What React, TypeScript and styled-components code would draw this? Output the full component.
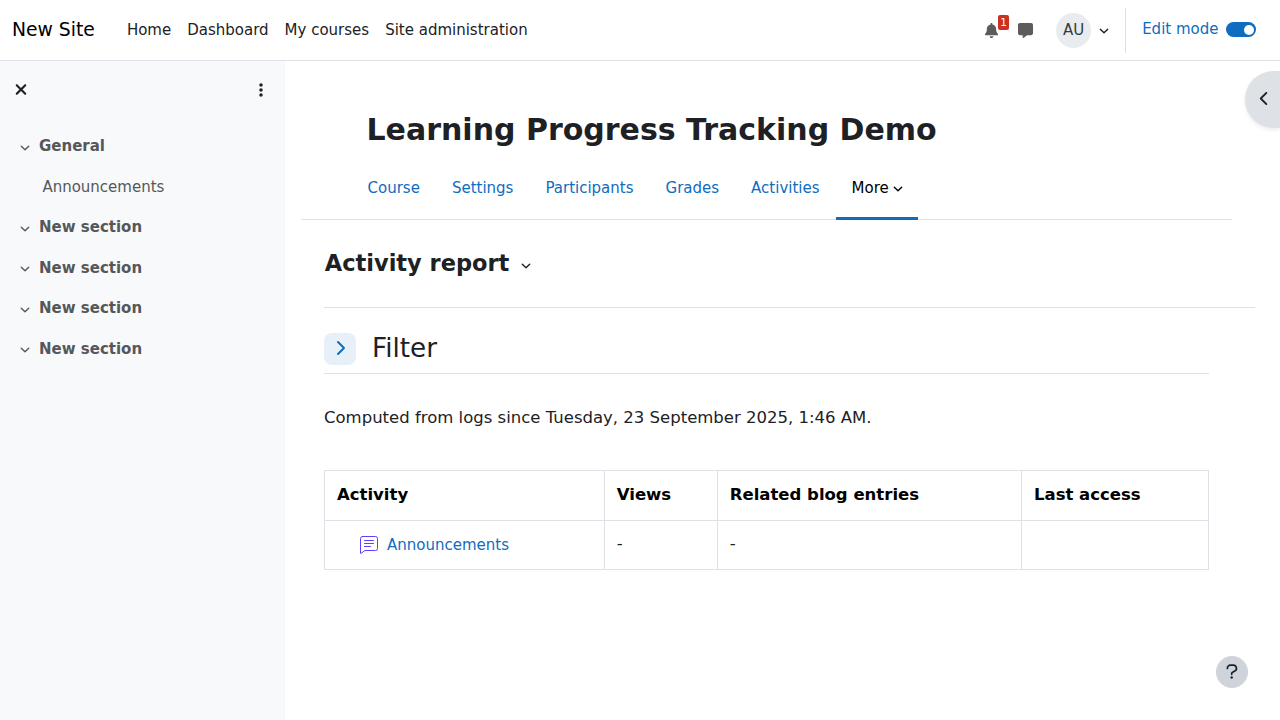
import React from 'react';
import styled, { createGlobalStyle } from 'styled-components';
import {
  FaBell,
  FaMessage,
  FaXmark,
  FaEllipsisVertical,
  FaChevronLeft,
  FaChevronRight,
} from 'react-icons/fa6';

const GlobalStyle = createGlobalStyle`
  *, *::before, *::after { box-sizing: border-box; }
  body {
    margin: 0;
    background: #fff;
    color: #1d2125;
    font-family: "DejaVu Sans", sans-serif;
    font-size: 15px;
    line-height: 1.5;
    overflow: hidden;
  }
  h1, h2, h3, p, ul { margin: 0; padding: 0; }
  ul { list-style: none; }
  a { color: #0f6cbf; text-decoration: none; }
  button { border: 0; padding: 0; font: inherit; color: inherit; background: none; }
  svg { display: block; }
`;

const Page = styled.div`
  height: 720px;
  display: flex;
  flex-direction: column;
`;

const Navbar = styled.header`
  flex: none;
  height: 61px;
  display: flex;
  align-items: center;
  padding: 0 24px 0 12px;
  border-bottom: 1px solid #dee2e6;
`;

const Brand = styled.a`
  width: 114.9px;
  color: #000;
  font-size: 18.75px;
  line-height: 28px;
  white-space: nowrap;
`;

const PrimaryNav = styled.nav`
  display: flex;
  gap: 16px;
  flex: 1;
`;

const PrimaryLink = styled.a`
  color: #1d2125;
`;

const NavTools = styled.div`
  display: flex;
  align-items: center;
  height: 60px;
`;

const ToolButton = styled.button<{ $gap: number }>`
  position: relative;
  color: #5c5c5c;
  margin-right: ${(p) => p.$gap}px;
`;

const CountBadge = styled.span`
  position: absolute;
  left: 14px;
  top: -8px;
  width: 11px;
  height: 15px;
  border-radius: 2px;
  background: #ca3120;
  color: #fff;
  font-size: 10.5px;
  line-height: 15px;
  text-align: center;
`;

const Avatar = styled.span`
  width: 35px;
  height: 35px;
  border-radius: 50%;
  background: #e9ecef;
  color: #343a40;
  display: grid;
  place-items: center;
  margin-right: 8px;
`;

const CaretIcon = styled.svg<{ $top: number; $left: number }>`
  width: 10px;
  height: 10px;
  margin-top: ${(p) => p.$top}px;
  margin-left: ${(p) => p.$left}px;
  flex: none;
  fill: none;
  stroke: currentColor;
  stroke-width: 1.4;
  stroke-linecap: round;
  stroke-linejoin: round;
`;

const Caret = ({ top = 0, left = 0 }: { top?: number; left?: number }) => (
  <CaretIcon viewBox="0 0 10 10" $top={top} $left={left}>
    <path d="M1.300 3.200L5 6.800L8.700 3.200" />
  </CaretIcon>
);

const EditMode = styled.label`
  display: flex;
  align-items: center;
  height: 45px;
  margin-left: 16px;
  padding: 0 0 1px 16px;
  border-left: 1px solid #dee2e6;
  color: #0f6cbf;
`;

const Toggle = styled.span`
  width: 30px;
  height: 15px;
  border-radius: 8px;
  background: #0f6cbf;
  margin-left: 7.5px;
  padding: 2.5px;
  display: flex;
  justify-content: flex-end;

  &::after {
    content: '';
    width: 10px;
    height: 10px;
    border-radius: 50%;
    background: #fff;
  }
`;

const Body = styled.div`
  flex: 1;
  display: flex;
  min-height: 0;
`;

const Sidebar = styled.aside`
  width: 285px;
  flex: none;
  background: #f8f9fb;
`;

const DrawerHeader = styled.div`
  height: 58px;
  display: flex;
  align-items: center;
  justify-content: space-between;
  padding: 0 16px 0 12px;
`;

const CloseIcon = styled(FaXmark)`
  width: 18px;
  height: 17px;
  margin-bottom: 1px;
`;

const IndexList = styled.ul`
  padding: 7px 0 0 20px;
`;

const IndexSection = styled.li`
  display: flex;
  align-items: center;
  height: 40.5px;
  gap: 9px;
  color: #555759;
  font-weight: 700;
`;

const IndexItem = styled.li`
  display: flex;
  align-items: center;
  height: 40.5px;
  padding: 1px 0 0 22.4px;
  color: #555759;
`;

const Main = styled.main`
  flex: 1;
  min-width: 0;
`;

const CourseTitle = styled.h1`
  padding: 46px 0 0 81.5px;
  font-size: 30px;
  line-height: 45px;
`;

const Tabs = styled.nav`
  display: flex;
  height: 65px;
  margin: 3px 48px 0 16px;
  padding: 3px 0 0 50.5px;
  border-bottom: 1px solid #dee2e6;
`;

const Tab = styled.a<{ $active?: boolean }>`
  display: flex;
  align-items: center;
  height: 62px;
  padding: 2px ${(p) => (p.$active ? 15.5 : 16)}px 0 16px;
  color: ${(p) => (p.$active ? '#000' : '#0f6cbf')};
  border-bottom: 3px solid ${(p) => (p.$active ? '#0f6cbf' : 'transparent')};
`;

const Report = styled.section`
  padding: 0 71px 0 39px;
`;

const ReportHeader = styled.div`
  display: flex;
  align-items: center;
  height: 88px;
  margin-right: -46px;
  padding: 0 0 2px 0.75px;
  border-bottom: 1px solid #dee2e6;
`;

const ReportTitle = styled.h2`
  font-size: 22.5px;
  line-height: 34px;
`;

const FilterRow = styled.div`
  display: flex;
  align-items: center;
  height: 66px;
  padding-top: 17px;
  border-bottom: 1px solid #dee2e6;
`;

const ExpandButton = styled.button`
  width: 32px;
  height: 32px;
  border-radius: 8px;
  display: grid;
  place-items: center;
  padding-bottom: 2px;
  background: #e7f0f9;
  color: #0f6cbf;
  margin-right: 16px;
`;

const FilterTitle = styled.h3`
  font-size: 26.25px;
  font-weight: 400;
  line-height: 32px;
  margin-bottom: 2px;
`;

const Note = styled.p`
  padding-top: 32px;
  font-size: 16.5px;
  line-height: 24px;
`;

const Table = styled.table`
  width: 885px;
  margin-top: 40px;
  border-collapse: collapse;
  table-layout: fixed;
  font-size: 16.5px;
`;

const cell = `
  border: 1px solid #dee2e6;
  padding: 0 12px 0 11.75px;
  text-align: left;

  &:first-child, &:last-child {
    padding-left: 12px;
  }
`;

const HeadCell = styled.th<{ $width: number }>`
  ${cell}
  width: ${(p) => p.$width}px;
  height: 50px;
  color: #000;
`;

const Cell = styled.td`
  ${cell}
  height: 49px;
  padding-bottom: 2px;
`;

const ActivityLink = styled.a`
  display: flex;
  align-items: center;
  gap: 9px;
  padding: 3px 0 0 23px;
  font-size: 15px;

  svg {
    margin-bottom: 1px;
  }
`;

const DrawerToggle = styled.button`
  position: absolute;
  top: 71px;
  right: 0;
  width: 35px;
  height: 57px;
  padding: 0 0 2px 12px;
  display: flex;
  align-items: center;
  border-radius: 29px 0 0 29px;
  background: #dee2e6;
  box-shadow: 0 2px 4px rgba(0, 0, 0, 0.08);
`;

const HelpButton = styled.button`
  position: absolute;
  right: 32px;
  bottom: 32px;
  width: 32px;
  height: 32px;
  border-radius: 50%;
  display: grid;
  place-items: center;
  padding-bottom: 2px;
  background: #ced4da;
`;

const ForumIcon = () => (
  <svg width="18" height="18" viewBox="0 0 18 18" fill="none" stroke="#5b40ff" strokeLinecap="round" strokeLinejoin="round">
    <path d="M2.500.5h13a2 2 0 0 1 2 2v10a2 2 0 0 1-2 2H5L.9 17.500c-.2.1-.4 0-.4-.2V2.500a2 2 0 0 1 2-2z" />
    <path d="M4.500 4.500h9M4.500 7.500h9M4.500 10.500h6" />
  </svg>
);

const HelpIcon = () => (
  <svg width="12" height="15" viewBox="0 0 12 15" fill="none" stroke="#1d2125" strokeWidth="1.700" strokeLinecap="round" strokeLinejoin="round">
    <path d="M1.400 4.500V4.100A3 3 0 0 1 4.400 1.100h2.800a3.200 3.200 0 0 1 1.600 6L6.200 8.600Q5.700 8.900 5.700 9.500v.8" />
    <circle cx="5.700" cy="13.500" r="1.200" fill="#1d2125" stroke="none" />
  </svg>
);

const primaryLinks = ['Home', 'Dashboard', 'My courses', 'Site administration'];
const tabs = ['Course', 'Settings', 'Participants', 'Grades', 'Activities'];
const columns = [
  { label: 'Activity', width: 280 },
  { label: 'Views', width: 113 },
  { label: 'Related blog entries', width: 304 },
  { label: 'Last access', width: 187 },
];

const Section = ({ title }: { title: string }) => (
  <IndexSection>
    <Caret top={3} />
    <span>{title}</span>
  </IndexSection>
);

export default function App() {
  return (
    <Page>
      <GlobalStyle />
      <Navbar>
        <Brand>New Site</Brand>
        <PrimaryNav>
          {primaryLinks.map((label) => (
            <PrimaryLink key={label}>{label}</PrimaryLink>
          ))}
        </PrimaryNav>
        <NavTools>
          <ToolButton $gap={18.5} aria-label="Notifications">
            <FaBell size={15} />
            <CountBadge>1</CountBadge>
          </ToolButton>
          <ToolButton $gap={23.5} aria-label="Messages">
            <FaMessage size={15} />
          </ToolButton>
          <Avatar>AU</Avatar>
          <Caret top={2} />
          <EditMode>
            Edit mode
            <Toggle />
          </EditMode>
        </NavTools>
      </Navbar>
      <Body>
        <Sidebar>
          <DrawerHeader>
            <CloseIcon />
            <FaEllipsisVertical size={16} />
          </DrawerHeader>
          <IndexList>
            <Section title="General" />
            <IndexItem>Announcements</IndexItem>
            <Section title="New section" />
            <Section title="New section" />
            <Section title="New section" />
            <Section title="New section" />
          </IndexList>
        </Sidebar>
        <Main>
          <CourseTitle>Learning Progress Tracking Demo</CourseTitle>
          <Tabs>
            {tabs.map((label) => (
              <Tab key={label}>{label}</Tab>
            ))}
            <Tab $active>
              More
              <Caret top={1} left={4} />
            </Tab>
          </Tabs>
          <Report>
            <ReportHeader>
              <ReportTitle>Activity report</ReportTitle>
              <Caret top={6} left={11.5} />
            </ReportHeader>
            <FilterRow>
              <ExpandButton aria-label="Expand">
                <FaChevronRight size={16} />
              </ExpandButton>
              <FilterTitle>Filter</FilterTitle>
            </FilterRow>
            <Note>Computed from logs since Tuesday, 23 September 2025, 1:46 AM.</Note>
            <Table>
              <thead>
                <tr>
                  {columns.map((c) => (
                    <HeadCell key={c.label} $width={c.width}>{c.label}</HeadCell>
                  ))}
                </tr>
              </thead>
              <tbody>
                <tr>
                  <Cell>
                    <ActivityLink>
                      <ForumIcon />
                      Announcements
                    </ActivityLink>
                  </Cell>
                  <Cell>-</Cell>
                  <Cell>-</Cell>
                  <Cell />
                </tr>
              </tbody>
            </Table>
          </Report>
        </Main>
      </Body>
      <DrawerToggle aria-label="Open block drawer">
        <FaChevronLeft size={15} />
      </DrawerToggle>
      <HelpButton aria-label="Help">
        <HelpIcon />
      </HelpButton>
    </Page>
  );
}
